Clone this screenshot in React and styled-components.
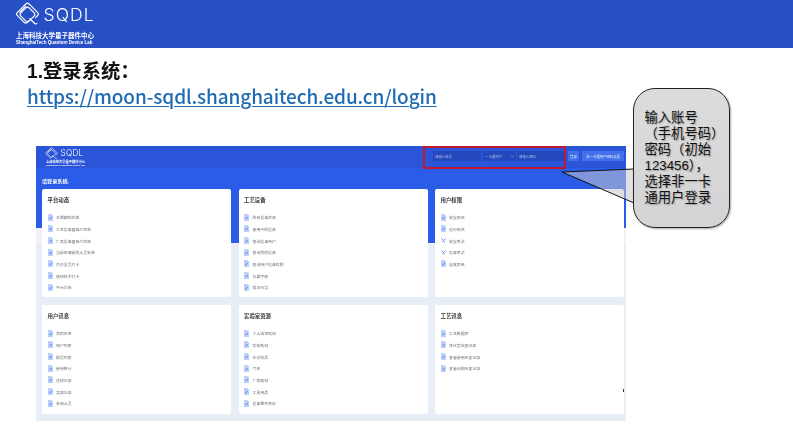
import React from "react";
import styled, { createGlobalStyle } from "styled-components";

const GlobalStyle = createGlobalStyle`
  html, body {
    margin: 0;
    padding: 0;
    background: #fff;
    font-family: "Noto Sans CJK SC", "Noto Sans", sans-serif;
  }
`;

const Slide = styled.div`
  position: relative;
  width: 793px;
  height: 446px;
  overflow: hidden;
  background: #fff;
`;

const Banner = styled.header`
  height: 48px;
  box-sizing: border-box;
  padding: 2px 0 0 16px;
  background: #274fc6;
  filter: blur(0.35px);
`;

const LogoRow = styled.div`
  display: flex;
  align-items: center;
  gap: ${(props) => (props.small ? "2.5px" : "3.5px")};
  margin-left: ${(props) => (props.small ? "0" : "-1px")};
  height: ${(props) => (props.small ? "14px" : "25px")};
`;

const LogoWord = styled.span`
  font-family: Inter, sans-serif;
  font-weight: 300;
  color: #fff;
  line-height: 1;
  font-size: ${(props) => (props.small ? "8.3px" : "17.5px")};
  letter-spacing: ${(props) => (props.small ? "0.2px" : "1.1px")};
`;

const LogoCn = styled.div`
  color: #fff;
  font-weight: 700;
  white-space: nowrap;
  font-size: ${(props) => (props.small ? "3.25px" : "6.5px")};
  line-height: ${(props) => (props.small ? "3.5px" : "7px")};
  margin: ${(props) => (props.small ? "0 0 0 1px" : "5px 0 0")};
`;

const LogoEn = styled.div`
  font-family: "Liberation Sans", sans-serif;
  color: #fff;
  font-weight: 700;
  white-space: nowrap;
  font-size: ${(props) => (props.small ? "2.3px" : "4.5px")};
  line-height: ${(props) => (props.small ? "2.5px" : "5px")};
  margin: ${(props) => (props.small ? "0 0 0 1px" : "1px 0 0")};
`;

const Intro = styled.section`
  height: 98px;
  box-sizing: border-box;
  padding: 11px 0 0 27px;
  filter: blur(0.3px);
`;

const Heading = styled.h1`
  margin: 0;
  font-family: "Liberation Sans", "Noto Sans CJK SC", sans-serif;
  font-size: 19.3px;
  line-height: 25px;
  font-weight: 700;
  color: #111;
`;

const LoginLink = styled.a`
  display: inline-block;
  font-size: 19px;
  line-height: 24px;
  letter-spacing: -0.12px;
  font-weight: 500;
  color: #1f6cb4;
  text-decoration: underline;
  text-decoration-thickness: 1px;
  text-underline-offset: 2px;
`;

const ShotFrame = styled.div`
  position: relative;
  width: 590px;
  height: 275px;
  margin-left: 36px;
`;

const Shot = styled.div`
  height: 100%;
  display: flex;
  flex-direction: column;
  filter: blur(0.45px);
`;

const TopBar = styled.div`
  height: 22px;
  flex-shrink: 0;
  display: flex;
  align-items: flex-start;
  justify-content: space-between;
  box-sizing: border-box;
  padding: 5px 2px 0 9px;
  background: #2a55d9;
`;

const TopBrand = styled.div`
  margin-top: -5px;
`;

const LoginForm = styled.div`
  display: flex;
  align-items: center;
  height: 10px;
`;

const Field = styled.div`
  box-sizing: border-box;
  width: ${(props) => props.width}px;
  height: 10px;
  margin-right: ${(props) => props.gap}px;
  padding-left: 2px;
  display: flex;
  align-items: center;
  justify-content: space-between;
  background: #2447bb;
  color: #a9baf0;
  font-size: 3.4px;
`;

const Action = styled.div`
  width: ${(props) => props.width}px;
  height: 10px;
  margin-left: ${(props) => props.gap}px;
  display: flex;
  align-items: center;
  justify-content: center;
  background: #4270ea;
  color: #e6ecfd;
  font-size: 3.4px;
  white-space: nowrap;
`;

const Body = styled.div`
  flex: 1;
  box-sizing: border-box;
  padding: 0 2px 7px 6px;
  background:
    linear-gradient(#2b5ce8 0 75px, transparent 75px) 6px 0 / 582px 100% no-repeat,
    linear-gradient(#2b5ce8 0 60px, #f1f3f8 60px 76px, #e8eef6 76px);
`;

const BandTitle = styled.div`
  height: 21px;
  box-sizing: border-box;
  padding-top: 4px;
  display: flex;
  align-items: center;
  color: #fff;
  font-size: 5.1px;
  font-weight: 700;
`;

const CardGrid = styled.div`
  display: grid;
  grid-template-columns: repeat(3, 189px);
  grid-template-rows: 108px 109px;
  gap: 8px 7.5px;
`;

const Card = styled.div`
  box-sizing: border-box;
  padding: 7px 5.5px 0;
  background: #fff;
  border-radius: 2px;
`;

const CardTitle = styled.div`
  height: 8px;
  line-height: 8px;
  font-size: 5.4px;
  font-weight: 700;
  color: #333;
`;

const LinkList = styled.ul`
  list-style: none;
  margin: 7.5px 0 0;
  padding: 0;
`;

const LinkItem = styled.li`
  height: 11.65px;
  display: flex;
  align-items: center;
  gap: 3.5px;
  font-size: 3.9px;
  color: #6a6e76;
`;

const RedFrame = styled.div`
  position: absolute;
  left: 387px;
  top: 0;
  width: 143px;
  height: 23px;
  box-sizing: border-box;
  border: 2.5px solid #c2182f;
`;

const Pointer = styled.svg`
  position: absolute;
  left: 556px;
  top: 164px;
`;

const CalloutBox = styled.div`
  position: absolute;
  left: 633px;
  top: 88px;
  width: 97px;
  height: 140px;
  box-sizing: border-box;
  padding: 21px 0 0 10.5px;
  border: 1px solid #222;
  border-radius: 22px;
  background: linear-gradient(#dcdcdc, #d4d4d6);
  box-shadow: 1px 1px 2px rgba(0, 0, 0, 0.35);
  color: #111;
  font-family: "Liberation Sans", "Noto Sans CJK SC", sans-serif;
  font-size: 13.3px;
  text-shadow: 1px 1px 1.5px rgba(0, 0, 0, 0.3);
  white-space: nowrap;
`;

const CalloutLine = styled.div`
  height: 16px;
  line-height: 16px;
`;

const Speck = styled.div`
  position: absolute;
  left: 587px;
  top: 243px;
  width: 1px;
  height: 3px;
  background: #333;
`;

const calloutLines = ["输入账号", "（手机号码）", "密码（初始", "123456），", "选择非一卡", "通用户登录"];

const sections = [
  {
    title: "平台动态",
    items: ["本周期的状态", "工艺设备面板灯状态", "厂务设备面板灯状态", "当前申请前的人员名单", "月会全员打卡", "值班技术打卡", "平台公告"],
  },
  {
    title: "工艺设备",
    items: ["所有设备状态", "使用中的设备", "查询设备用户", "查询我的设备", "查询用户设备权限", "仪器手册", "常见问答"],
  },
  {
    title: "用户权限",
    items: ["安全规范", "运行规范", { label: "安全考试", fold: true }, { label: "设备考试", fold: true }, "自查表格"],
  },
  {
    title: "用户讯息",
    items: ["我的讯息", "用户列表", "职员列表", "使用统计", "违规记录", "奖励记录", "参观人员"],
  },
  {
    title: "实验室资源",
    items: ["个人洁净耗材", "实验耗材", "化学药品", "气体", "厂务耗材", "工具用品", "设备零件库存"],
  },
  {
    title: "工艺讯息",
    items: ["工艺数据库", "净化室巡查记录", "查看使用历史记录", "查看问题历史记录"],
  },
];

function LogoMark({ size }) {
  return (
    <svg width={size} height={size} viewBox="0 0 28 28" fill="none" stroke="#fff" strokeWidth="1.3" strokeLinecap="round">
      <path d="M16 20.5 L13.5 23 Q12 24.4 10.5 23 L2.5 15 Q1 13.5 2.5 12 L12.5 2 Q14 0.6 15.5 2 L25.5 12 Q27 13.5 25.5 15 L23 17.5" />
      <rect x="7.5" y="7.5" width="13" height="13" rx="2.5" transform="rotate(45 14 14)" />
      <path d="M5.5 11.5 L12 5 M16.5 18.5 L22 24 Q23.5 25 24.5 24" />
    </svg>
  );
}

function DocIcon() {
  return (
    <svg width="5" height="7" viewBox="0 0 5 7" style={{ flexShrink: 0 }}>
      <path d="M0 0 H3.4 L5 1.6 V7 H0 Z" fill="#bccffa" />
      <path d="M1.4 3.9 L2.2 4.7 L3.6 3.2" fill="none" stroke="#2f5ce0" strokeWidth="0.8" />
    </svg>
  );
}

function FoldIcon() {
  return (
    <svg width="5" height="7" viewBox="0 0 5 7" style={{ flexShrink: 0 }}>
      <path d="M0.4 1.6 L2.5 3.4 L4.6 1.6 M1 5.2 L2.5 4 L4 5.2" fill="none" stroke="#4f78ea" strokeWidth="0.8" />
    </svg>
  );
}

function App() {
  return (
    <Slide>
      <GlobalStyle />
      <Banner>
        <LogoRow>
          <LogoMark size={25} />
          <LogoWord>SQDL</LogoWord>
        </LogoRow>
        <LogoCn>上海科技大学量子器件中心</LogoCn>
        <LogoEn>ShanghaiTech Quantum Device Lab</LogoEn>
      </Banner>

      <Intro>
        <Heading>1.登录系统：</Heading>
        <LoginLink href="#login">https://moon-sqdl.shanghaitech.edu.cn/login</LoginLink>
      </Intro>

      <ShotFrame>
        <Shot>
          <TopBar>
            <TopBrand>
              <LogoRow small>
                <LogoMark size={13} />
                <LogoWord small>SQDL</LogoWord>
              </LogoRow>
              <LogoCn small>上海科技大学量子器件中心</LogoCn>
              <LogoEn small>ShanghaiTech Quantum Device Lab</LogoEn>
            </TopBrand>
            <LoginForm>
              <Field width={48} gap={2}>请输入账号</Field>
              <Field width={33} gap={1}>
                一卡通用户
                <svg width="4" height="3" viewBox="0 0 4 3" style={{ marginRight: 2 }}>
                  <path d="M0.5 0.8 L2 2.2 L3.5 0.8" fill="none" stroke="#a9baf0" strokeWidth="0.5" />
                </svg>
              </Field>
              <Field width={48} gap={0}>请输入密码</Field>
              <Action width={11} gap={3}>登录</Action>
              <Action width={42} gap={3}>非一卡通用户密码设置</Action>
            </LoginForm>
          </TopBar>
          <Body>
            <BandTitle>请登录系统.</BandTitle>
            <CardGrid>
              {sections.map((section) => (
                <Card key={section.title}>
                  <CardTitle>{section.title}</CardTitle>
                  <LinkList>
                    {section.items.map((item) => {
                      const label = item.label || item;
                      return (
                        <LinkItem key={label}>
                          {item.fold ? <FoldIcon /> : <DocIcon />}
                          {label}
                        </LinkItem>
                      );
                    })}
                  </LinkList>
                </Card>
              ))}
            </CardGrid>
          </Body>
        </Shot>
        <RedFrame />
        <Speck />
      </ShotFrame>

      <Pointer width="80" height="48" viewBox="0 0 80 48">
        <path d="M6 8 L78 5 L78 39 Z" fill="rgba(196,198,206,0.55)" />
        <path d="M78 5 L6 8 L78 39" fill="none" stroke="#111" strokeWidth="1" />
      </Pointer>
      <CalloutBox>
        {calloutLines.map((line) => (
          <CalloutLine key={line}>{line}</CalloutLine>
        ))}
      </CalloutBox>
    </Slide>
  );
}

export default App;
